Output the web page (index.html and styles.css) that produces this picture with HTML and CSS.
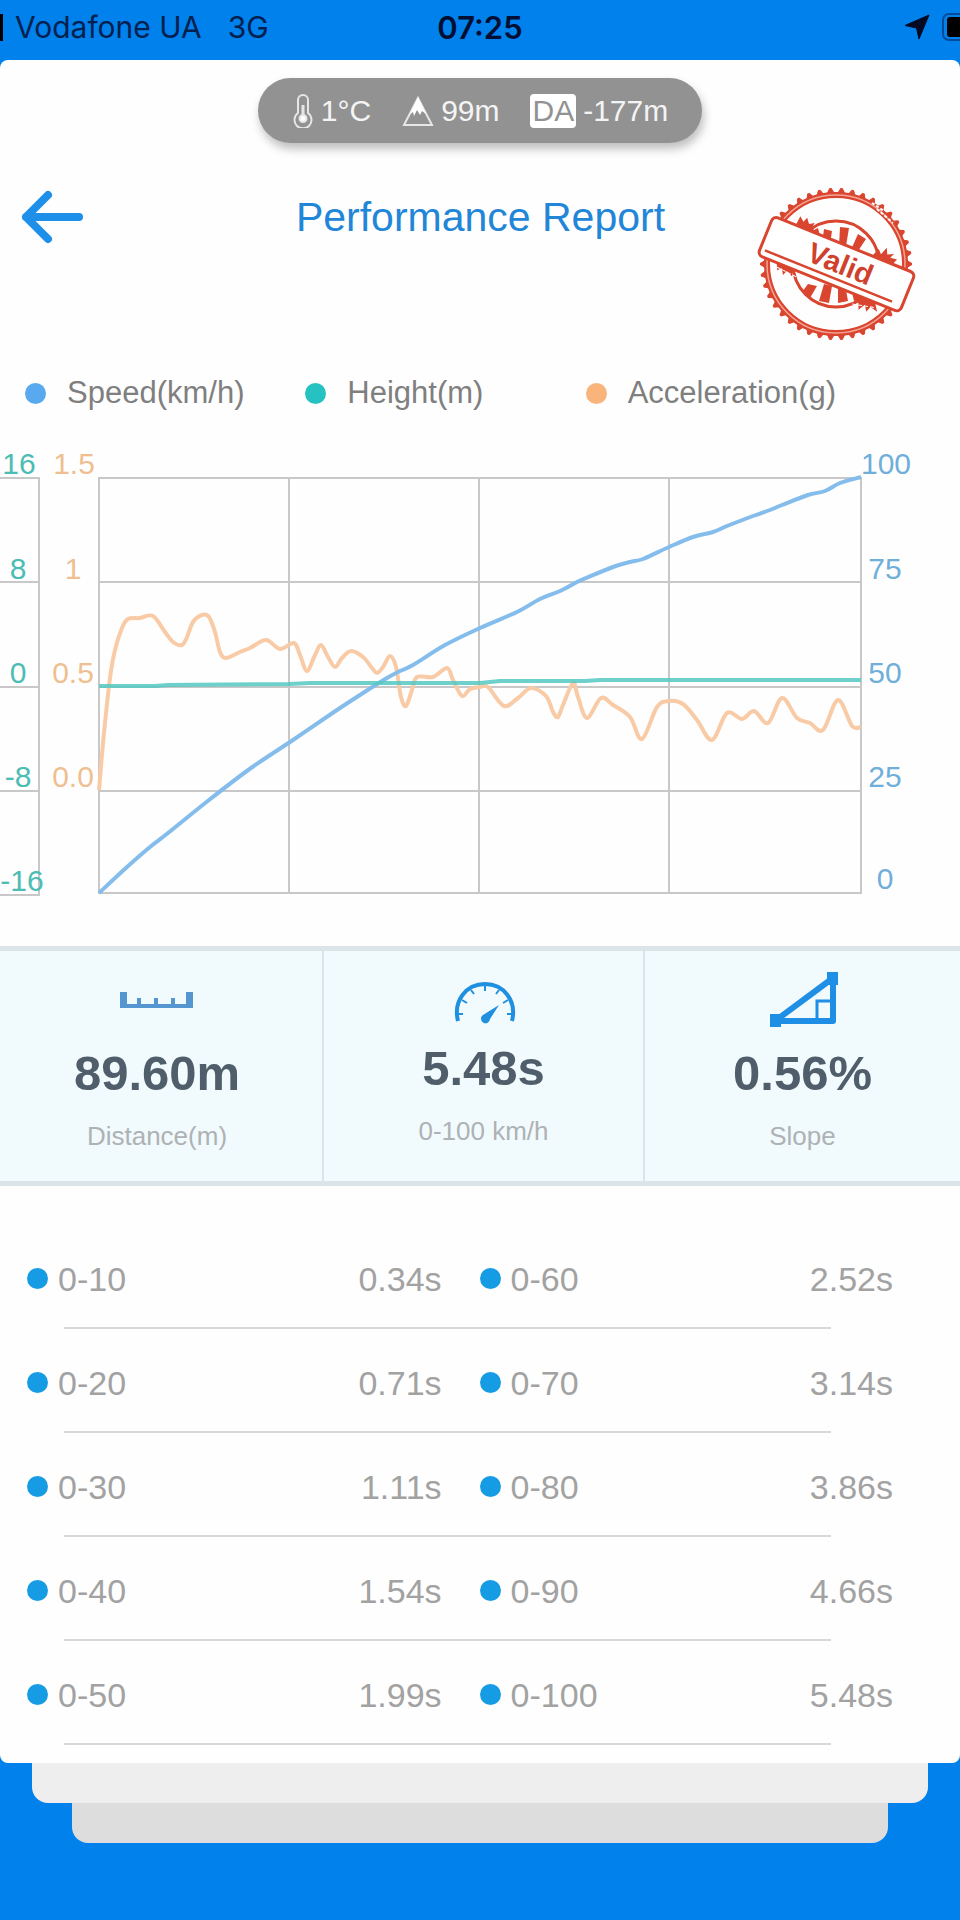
FILE: index.html
```html
<!DOCTYPE html>
<html lang="en">
<head>
  <meta charset="UTF-8">
  <meta name="viewport" content="width=device-width, initial-scale=1">
  <title>Performance Report</title>
  <link rel="stylesheet" href="styles.css">
</head>
<body>
  <div class="status-bar">
    <div class="carrier">
      <span class="signal"></span>
      <span>Vodafone UA</span>
      <span class="network">3G</span>
    </div>
    <div class="clock">07:25</div>
    <div class="status-icons">
      <svg width="26" height="26" viewBox="0 0 26 26"><path d="M25 1 L15 25 L12.500 14 L1 11.500 Z" fill="#020a24" stroke="#020a24" stroke-linejoin="round"/></svg>
      <svg width="18" height="28" viewBox="0 0 18 28"><rect x="1" y="1" width="40" height="26" rx="6" fill="none" stroke="#034a9c" stroke-width="2"/><rect x="5" y="4" width="30" height="20" rx="3" fill="#000"/></svg>
    </div>
  </div>

  <main class="card">
    <div class="conditions">
      <span class="condition">
        <svg width="22" height="34" viewBox="0 0 22 34" fill="none" stroke="#e6e6e6" stroke-width="2"><path d="M6 19 V6 a5 5 0 0 1 10 0 V19 a8.500 8.500 0 1 1 -10 0 Z"/><path d="M11 11 V24" stroke-width="3"/><circle cx="11" cy="24.500" r="3.500" fill="#fff"/></svg>
        1°C
      </span>
      <span class="condition">
        <svg width="32" height="34" viewBox="0 0 32 34"><path d="M16 4 L30 31 H2 Z" fill="none" stroke="#e6e6e6" stroke-width="2"/><path d="M16 3 L24 20 L20 17 L18 21 L15 16 L12 22 L11 18 L8 20 Z" fill="#fff"/></svg>
        99m
      </span>
      <span class="condition"><span class="da">DA</span>-177m</span>
    </div>

    <header class="header">
      <button class="back" type="button" aria-label="Back">
        <svg width="64" height="54" viewBox="0 0 64 54" fill="none" stroke="#1e90ea" stroke-width="8" stroke-linecap="round" stroke-linejoin="round"><path d="M58 27 H5 M27 5 L5 27 L27 49"/></svg>
      </button>
      <h1 class="title">Performance Report</h1>
      <svg class="stamp" width="160" height="158" viewBox="-80 -80 160 158" fill="none" stroke="#d9452f">
        <path id="stamp-teeth" fill="#d9452f" stroke="none"/>
        <circle r="69" stroke-width="6"/>
        <circle r="69" stroke="#f4a596" stroke-width="1.500"/>
        <path d="M36 -61 L48 -53 M41 -55 L57 -41" stroke="#fff" stroke-width="2" stroke-dasharray="3 2"/>
        <circle r="43" stroke-width="3"/>
        <path d="M-12 -35 L-4 -33 L-6 -20 L-14 -20 Z M4 -37 L13 -36 L10 -18 L3 -18 Z M22 -30 L30 -25 L20 -10 L14 -12 Z M-26 -32 L-18 -36 L-14 -20 L-20 -22 Z M-28 20 L-19 22 L-26 34 L-34 28 Z M-12 20 L-4 22 L-7 39 L-17 37 Z M2 24 L10 26 L12 37 L2 39 Z M16 28 L24 30 L26 32 L18 37 Z" fill="#d9452f" stroke="none"/>
        <g transform="rotate(22)">
          <path d="M-52 -20 L-51 -31 L-46 -27 L-44 -32 L-40 -27 L-35 -30 L-36 -25 L-28 -20 Z M30 -20 L34 -30 L38 -26 L41 -34 L44 -28 L50 -31 L48 -26 L55 -27 L52 -20 Z" fill="#d9452f" stroke="none"/>
          <path d="M-56 20 L-52 28 L-49 24 L-45 30 L-43 25 L-36 28 L-38 20 Z M28 20 L32 30 L35 27 L38 34 L42 27 L46 33 L48 27 L56 29 L50 20 Z" fill="#d9452f" stroke="none"/>
          <path d="M-54 25 L-30 27 M30 31 L52 26" stroke="#fff" stroke-width="1" stroke-dasharray="4 2"/>
          <rect x="-76" y="-21" width="153" height="42" rx="5" fill="#fff" stroke-width="3"/>
          <path d="M-71 14 H66" stroke-width="2.500"/>
          <text class="stamp-text" x="4" y="8">Valid</text>
        </g>
      </svg>
    </header>

    <div class="legend">
      <span class="legend-item"><i class="dot speed"></i>Speed(km/h)</span>
      <span class="legend-item"><i class="dot height"></i>Height(m)</span>
      <span class="legend-item"><i class="dot accel"></i>Acceleration(g)</span>
    </div>

    <svg class="chart" viewBox="0 -10 960 460" role="img" aria-label="Speed, height and acceleration">
      <g class="grid-lines">
        <path d="M0 28 H39 M0 132 H39 M0 237 H39 M0 341 H39 M0 445 H39 M39 27 V446"/>
        <path d="M99 28 H861 M99 132 H861 M99 237 H861 M99 341 H861 M99 443 H861"/>
        <path d="M99 27 V444 M289 28 V443 M479 28 V443 M669 28 V443 M861 27 V444"/>
      </g>
      <path id="accel-line" class="line accel-line"/>
      <path id="speed-line" class="line speed-line"/>
      <path id="height-line" class="line height-line"/>
      <g class="axis height-axis">
        <text x="19" y="24">16</text>
        <text x="18" y="129">8</text>
        <text x="18" y="233">0</text>
        <text x="18" y="337">-8</text>
        <text x="22" y="441">-16</text>
      </g>
      <g class="axis accel-axis">
        <text x="74" y="24">1.5</text>
        <text x="73" y="129">1</text>
        <text x="73" y="233">0.5</text>
        <text x="73" y="337">0.0</text>
      </g>
      <g class="axis speed-axis">
        <text x="886" y="24">100</text>
        <text x="885" y="129">75</text>
        <text x="885" y="233">50</text>
        <text x="885" y="337">25</text>
        <text x="885" y="439">0</text>
      </g>
    </svg>

    <section class="stats">
      <div class="stat">
        <svg width="80" height="64" viewBox="0 0 80 64"><path d="M3 24 H10 V36 H20 V30 H24 V36 H37 V30 H41 V36 H54 V30 H58 V36 H69 V24 H76 V40 H3 Z" fill="#5596d0"/></svg>
        <strong class="stat-value">89.60m</strong>
        <span class="stat-label">Distance(m)</span>
      </div>
      <div class="stat stat-time">
        <svg width="80" height="64" viewBox="0 0 80 64" fill="none" stroke="#1f8fdf"><path d="M14 58 C9 38 22 21 41 21 C60 21 73 38 68 58" stroke-width="4"/><path d="M14 51 H19 M18 37 L23 40 M27 27 L30 31 M41 22 V28 M55 27 L52 31 M64 37 L59 40 M68 51 H63" stroke-width="2"/><path d="M55 42 L46 56 A4.500 4.500 0 1 1 39 52 Z" fill="#1f8fdf" stroke="none"/></svg>
        <strong class="stat-value">5.48s</strong>
        <span class="stat-label">0-100 km/h</span>
      </div>
      <div class="stat">
        <svg width="80" height="64" viewBox="0 0 80 64" fill="none" stroke="#1f8fe6"><path d="M12 53 H70 V10 Z" stroke-width="6" stroke-linejoin="round"/><path d="M54 51 V33 H68" stroke-width="3"/><path d="M7 46 H18 V59 H7 Z M64 4 H75 V17 H64 Z" fill="#1f8fe6" stroke="none"/></svg>
        <strong class="stat-value">0.56%</strong>
        <span class="stat-label">Slope</span>
      </div>
    </section>

    <table class="splits">
      <colgroup><col class="col-range"><col class="col-time"><col class="col-wide"><col class="col-wide"></colgroup>
      <tbody>
        <tr><th scope="row"><i class="dot"></i>0-10</th><td>0.34s</td><th scope="row"><i class="dot"></i>0-60</th><td>2.52s</td></tr>
        <tr><th scope="row"><i class="dot"></i>0-20</th><td>0.71s</td><th scope="row"><i class="dot"></i>0-70</th><td>3.14s</td></tr>
        <tr><th scope="row"><i class="dot"></i>0-30</th><td>1.11s</td><th scope="row"><i class="dot"></i>0-80</th><td>3.86s</td></tr>
        <tr><th scope="row"><i class="dot"></i>0-40</th><td>1.54s</td><th scope="row"><i class="dot"></i>0-90</th><td>4.66s</td></tr>
        <tr><th scope="row"><i class="dot"></i>0-50</th><td>1.99s</td><th scope="row"><i class="dot"></i>0-100</th><td>5.48s</td></tr>
      </tbody>
    </table>
  </main>

  <div class="sheet sheet-middle"></div>
  <div class="sheet sheet-back"></div>

  <script src="report.js"></script>
</body>
</html>
```
FILE: styles.css
```css
* {
  box-sizing: border-box;
}

body {
  margin: 0;
  min-height: 100vh;
  background-color: #0081ec;
  font-family: "Liberation Sans", Arial, sans-serif;
}

svg {
  display: block;
  flex-shrink: 0;
}

/* status bar */
.status-bar {
  display: grid;
  grid-template-columns: 1fr auto 1fr;
  align-items: center;
  height: 60px;
  padding-bottom: 6px;
  font-family: Inter, Roboto, sans-serif;
  font-size: 30px;
  color: #04204f;
}

.carrier {
  display: flex;
  align-items: center;
}

.signal {
  width: 3px;
  height: 27px;
  margin-right: 12px;
  background-color: #000;
}

.network {
  margin-left: 26px;
}

.clock {
  font-size: 31px;
  font-weight: 600;
  color: #020f33;
}

.status-icons {
  display: flex;
  align-items: center;
  justify-content: flex-end;
  gap: 12px;
}

/* report card */
.card {
  overflow: hidden;
  padding: 18px 0;
  background-color: #fefefe;
  border-radius: 8px;
}

.conditions {
  display: flex;
  align-items: center;
  gap: 31px;
  width: fit-content;
  height: 65px;
  margin: 0 auto;
  padding: 0 34px;
  border-radius: 33px;
  background-color: #929292;
  box-shadow: 2px 6px 10px rgba(0, 0, 0, 0.25);
  color: #f4f4f4;
  font-size: 30px;
}

.condition {
  display: flex;
  align-items: center;
  gap: 7px;
}

.da {
  padding: 0 2px;
  border-radius: 4px;
  background-color: #fff;
  color: #929292;
  line-height: 34px;
}

.header {
  display: grid;
  grid-template-columns: 1fr auto 1fr;
  align-items: start;
  margin-top: 41px;
  padding: 0 44px 0 21px;
}

.back {
  width: 64px;
  margin-top: 6px;
  padding: 0;
  border: none;
  background: none;
  cursor: pointer;
}

.title {
  margin: 9px 0 0 24px;
  font-size: 41px;
  line-height: 48px;
  font-weight: normal;
  color: #2286d8;
}

.stamp {
  justify-self: end;
}

.stamp-text {
  fill: #d0412d;
  stroke: none;
  font-size: 29px;
  font-weight: bold;
  text-anchor: middle;
}

.legend {
  display: grid;
  grid-template-columns: repeat(3, 1fr);
  margin-top: 33px;
  padding: 0 94px 0 25px;
  font-size: 31px;
  line-height: 36px;
  color: #7f7f7f;
}

.legend-item {
  display: flex;
  align-items: center;
  gap: 21px;
  white-space: nowrap;
}

.dot {
  flex-shrink: 0;
  width: 21px;
  height: 21px;
  border-radius: 50%;
  background-color: #169be5;
}

.speed {
  background-color: #58a9ee;
}

.height {
  background-color: #26c2c1;
}

.accel {
  background-color: #f9b47c;
}

/* chart */
.chart {
  width: 100%;
  height: auto;
  margin-top: 29px;
}

.grid-lines {
  fill: none;
  stroke: #c8c8c8;
  stroke-width: 2;
}

.line {
  fill: none;
  stroke-width: 4;
  stroke-linejoin: round;
}

.accel-line {
  stroke: #f8cba6;
}

.speed-line {
  stroke: #84bdec;
}

.height-line {
  stroke: #54c8c2;
  opacity: 0.85;
}

.axis {
  font-size: 30px;
  text-anchor: middle;
}

.height-axis {
  fill: #4bbdb4;
}

.accel-axis {
  fill: #efbf91;
}

.speed-axis {
  fill: #6fafda;
}

/* summary */
.stats {
  display: grid;
  grid-template-columns: 324fr 321fr 315fr;
  height: 240px;
  margin-top: 46px;
  border-top: 5px solid #dbe4e8;
  border-bottom: 5px solid #dbe4e8;
  background-color: #f1fafd;
}

.stat {
  display: flex;
  flex-direction: column;
  align-items: center;
  padding: 17px 8px 0 0;
  border-right: 2px solid #dbe4e8;
}

.stat:last-child {
  border-right: none;
  padding-right: 0;
}

.stat-time {
  padding: 12px 0 0;
}

.stat-value {
  margin-top: 13px;
  font-size: 49px;
  line-height: 56px;
  color: #4f5e6a;
}

.stat-label {
  margin-top: 19px;
  font-size: 26px;
  line-height: 32px;
  color: #aeb2b4;
}

/* split times */
.splits {
  width: 100%;
  margin-top: 39px;
  border-collapse: collapse;
  table-layout: fixed;
  font-size: 34px;
  line-height: 40px;
  color: #a2a2a2;
}

.col-range {
  width: 25%;
}

.col-time {
  width: 21%;
}

.col-wide {
  width: 27%;
}

.splits tr {
  height: 104px;
  background: linear-gradient(#d8d8d8, #d8d8d8) 64px 100% / calc(100% - 193px) 2px no-repeat;
}

.splits th,
.splits td {
  padding: 4px 0 0;
  font-weight: normal;
  text-align: left;
}

.splits td {
  text-align: right;
}

.splits th:first-child {
  padding-left: 27px;
}

.splits th:nth-child(3) {
  padding-left: 38px;
}

.splits td:last-child {
  padding-right: 67px;
}

.splits .dot {
  display: inline-block;
  margin-right: 10px;
  vertical-align: 2px;
}

/* sheets stacked behind the card */
.sheet {
  height: 40px;
  border-radius: 0 0 16px 16px;
}

.sheet-middle {
  margin: 0 32px;
  background-color: #eee;
}

.sheet-back {
  margin: 0 72px;
  background-color: #ddd;
}
```
FILE: report.js
```js
const accel = [
  [99, 340], [104, 283], [110, 228], [115, 200], [122, 178], [128, 169], [140, 168], [153, 166],
  [165, 182], [173, 192], [182, 195], [187, 187], [193, 172], [202, 165], [209, 167], [215, 182],
  [220, 202], [226, 208], [240, 202], [250, 198], [266, 190], [280, 199], [294, 193], [300, 205],
  [307, 221], [315, 205], [321, 195], [328, 207], [335, 217], [342, 208], [351, 201], [363, 207],
  [372, 218], [377, 223], [383, 217], [390, 206], [396, 217], [401, 247], [406, 256], [412, 240],
  [417, 227], [433, 227], [447, 218], [453, 230], [462, 246], [470, 239], [480, 237], [488, 237],
  [504, 256], [518, 248], [531, 238], [546, 246], [553, 262], [558, 267], [563, 255], [573, 233],
  [578, 247], [587, 268], [601, 248], [613, 255], [630, 267], [642, 289], [657, 257], [669, 251],
  [683, 254], [697, 270], [712, 290], [727, 263], [742, 269], [754, 261], [768, 273], [782, 248],
  [797, 268], [810, 273], [823, 280], [838, 250], [852, 276], [861, 277]
];

const speed = [
  [99, 443], [127, 417], [150, 397], [168, 383], [209, 350], [251, 318], [293, 290], [334, 262],
  [363, 243], [387, 228], [400, 221], [413, 215], [445, 195], [480, 178], [517, 162], [540, 149],
  [560, 141], [577, 132], [586, 128], [613, 117], [630, 112], [643, 109], [669, 97], [693, 87],
  [713, 82], [727, 76], [753, 66], [770, 60], [782, 55], [808, 45], [825, 41], [840, 33], [861, 27]
];

const height = [[99, 236], [155, 236], [168, 235], [289, 234], [310, 233], [480, 233], [500, 231], [585, 231], [600, 230], [861, 230]];

// smooth curve through all the points
function smoothPath(points) {
  let d = "M" + points[0].join(" ");
  for (let i = 0; i < points.length - 1; i++) {
    const p0 = points[i - 1] || points[i];
    const p1 = points[i];
    const p2 = points[i + 1];
    const p3 = points[i + 2] || p2;
    const c1 = [p1[0] + (p2[0] - p0[0]) / 6, p1[1] + (p2[1] - p0[1]) / 6];
    const c2 = [p2[0] - (p3[0] - p1[0]) / 6, p2[1] - (p3[1] - p1[1]) / 6];
    d += " C" + c1.join(" ") + " " + c2.join(" ") + " " + p2.join(" ");
  }
  return d;
}

document.getElementById("accel-line").setAttribute("d", smoothPath(accel));
document.getElementById("speed-line").setAttribute("d", smoothPath(speed));
document.getElementById("height-line").setAttribute("d", "M" + height.join(" L"));

// pointed edge of the stamp
const teeth = 42;
let edge = "";
for (let i = 0; i < teeth; i++) {
  const a = (i / teeth) * Math.PI * 2;
  const at = (r, angle) => (r * Math.cos(angle)).toFixed(1) + " " + (r * Math.sin(angle)).toFixed(1);
  edge += "M" + at(71, a - 0.055) + " L" + at(76, a - 0.015) + " L" + at(76, a + 0.015) + " L" + at(71, a + 0.055) + " Z ";
}
document.getElementById("stamp-teeth").setAttribute("d", edge);
```
